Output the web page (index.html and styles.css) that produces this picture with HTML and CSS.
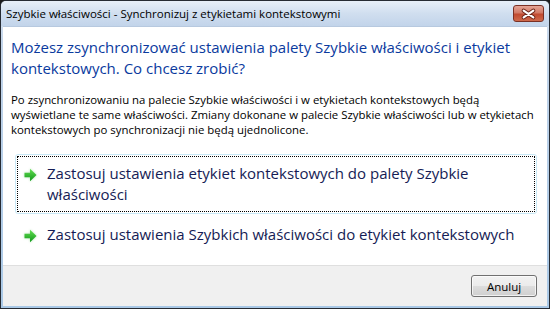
FILE: index.html
```html
<!DOCTYPE html>
<html lang="pl">
<head>
    <meta charset="UTF-8">
    <title>Szybkie właściwości - Synchronizuj z etykietami kontekstowymi</title>
    <link rel="stylesheet" href="styles.css">
</head>
<body>
    <div class="window">
        <div class="titlebar">
            <span class="title">Szybkie właściwości - Synchronizuj z etykietami kontekstowymi</span>
            <button class="close-btn" aria-label="Zamknij">
                <svg width="30" height="16" viewBox="0 0 30 16">
                    <path d="M10 4.5 L20 11.5 M20 4.5 L10 11.5" stroke="#6b2316" stroke-width="4.2" stroke-linecap="round"></path>
                    <path d="M10 4.5 L20 11.5 M20 4.5 L10 11.5" stroke="#ffffff" stroke-width="2.2" stroke-linecap="round"></path>
                </svg>
            </button>
        </div>

        <div class="client">
            <div class="content">
                <h1 class="main-instruction">Możesz zsynchronizować ustawienia palety Szybkie właściwości i etykiet<br>kontekstowych. Co chcesz zrobić?</h1>
                <p class="body-text">Po zsynchronizowaniu na palecie Szybkie właściwości i w etykietach kontekstowych będą<br>wyświetlane te same właściwości. Zmiany dokonane w palecie Szybkie właściwości lub w etykietach<br>kontekstowych po synchronizacji nie będą ujednolicone.</p>

                <div class="commands">
                    <a class="cmd-link focused" href="#">
                        <span class="cmd-body">
                            <svg class="cmd-arrow" width="13" height="14" viewBox="0 0 13 14">
                                <defs>
                                    <linearGradient id="arrowGrad" x1="0" y1="0" x2="0" y2="1">
                                        <stop offset="0" stop-color="#63de52"></stop>
                                        <stop offset="1" stop-color="#10981a"></stop>
                                    </linearGradient>
                                </defs>
                                <path d="M0.5 4.8 H6 V0.8 L12.5 7 L6 13.2 V9.2 H0.5 Z" fill="url(#arrowGrad)"></path>
                            </svg>
                            <span class="cmd-text">Zastosuj ustawienia etykiet kontekstowych do palety Szybkie<br>właściwości</span>
                        </span>
                    </a>
                    <a class="cmd-link" href="#">
                        <span class="cmd-body">
                            <svg class="cmd-arrow" width="13" height="14" viewBox="0 0 13 14">
                                <path d="M0.5 4.8 H6 V0.8 L12.5 7 L6 13.2 V9.2 H0.5 Z" fill="url(#arrowGrad)"></path>
                            </svg>
                            <span class="cmd-text">Zastosuj ustawienia Szybkich właściwości do etykiet kontekstowych</span>
                        </span>
                    </a>
                </div>
            </div>

            <div class="footer">
                <button class="btn">Anuluj</button>
            </div>
        </div>
    </div>
</body>
</html>
```

FILE: styles.css
```css
:root {
    --frame-top: #e1eaf5;
    --frame-bottom: #c3d5ea;
    --instruction: #0a3a9e;
    --cmd-text: #151c55;
    --footer-bg: #f0f0f0;
    --footer-line: #dfdfdf;
    --ui-font: 'Open Sans', 'Noto Sans', sans-serif;
}

* {
    margin: 0;
    padding: 0;
    box-sizing: border-box;
}

body {
    width: 550px;
    height: 309px;
    background-color: #1c1c1c;
    font-family: var(--ui-font);
    font-size: 11.4px;
    color: #000;
    overflow: hidden;
}

.window {
    width: 550px;
    height: 309px;
    display: flex;
    flex-direction: column;
    border: 1px solid #262b33;
    border-radius: 6px 6px 0 0;
    padding: 0 2px 2px 2px;
    background: linear-gradient(to bottom, var(--frame-top), var(--frame-bottom) 40px, #a9c8e6);
}

/* 标题栏 */
.titlebar {
    height: 25px;
    display: flex;
    align-items: flex-start;
    justify-content: space-between;
    padding-left: 5px;
    margin: 0 -2px;
    padding-right: 5px;
    border-radius: 5px 5px 0 0;
    background: linear-gradient(to bottom, #e7eff8, #d0deef 50%, #c2d4ea);
}

.title {
    font-size: 11.5px;
    line-height: 25px;
    color: #000;
    white-space: nowrap;
}

.close-btn {
    width: 31px;
    height: 17px;
    margin-top: 4px;
    border: 1px solid #7a3024;
    border-radius: 3px;
    background: linear-gradient(to bottom, #e4a496, #d27a66 45%, #c14a30 55%, #cf6a4c);
    display: flex;
    align-items: center;
    justify-content: center;
}

/* 内容区 */
.client {
    flex: 1;
    display: flex;
    flex-direction: column;
    background-color: #fff;
    border-top: 1px solid #b7c9df;
}

.content {
    flex: 1;
    padding: 10px 10px 0 8px;
}

.main-instruction {
    font-size: 15px;
    font-weight: 400;
    line-height: 21px;
    color: var(--instruction);
    white-space: nowrap;
}

.body-text {
    margin-top: 13px;
    line-height: 15px;
    white-space: nowrap;
}

.commands {
    margin: 17px 0 0 4px;
    display: flex;
    flex-direction: column;
    gap: 1px;
}

.cmd-link {
    display: block;
    padding: 1px;
    border: 1px solid transparent;
    border-radius: 3px;
    color: var(--cmd-text);
    text-decoration: none;
}

.cmd-link.focused {
    border-color: #c8e8f6;
}

.cmd-body {
    display: flex;
    align-items: flex-start;
    gap: 10px;
    padding: 6px 6px 6px 6px;
    border: 1px dotted transparent;
}

.cmd-link.focused .cmd-body {
    border-color: #000;
}

.cmd-arrow {
    flex-shrink: 0;
    margin-top: 5px;
    filter: drop-shadow(0 0 1px rgba(90, 200, 90, 0.5));
}

.cmd-text {
    font-size: 15px;
    line-height: 21px;
    white-space: nowrap;
}

/* 底部按钮栏 */
.footer {
    height: 41px;
    display: flex;
    justify-content: flex-end;
    align-items: flex-start;
    padding: 9px 10px 0 0;
    background-color: var(--footer-bg);
    border-top: 1px solid var(--footer-line);
}

.btn {
    width: 66px;
    height: 22px;
    font-family: var(--ui-font);
    font-size: 11.5px;
    color: #000;
    border: 1px solid #707070;
    border-radius: 3px;
    background: linear-gradient(to bottom, #f2f2f2, #ebebeb 50%, #dddddd 51%, #cfcfcf);
    box-shadow: inset 0 0 0 1px rgba(255, 255, 255, 0.7);
}
```
